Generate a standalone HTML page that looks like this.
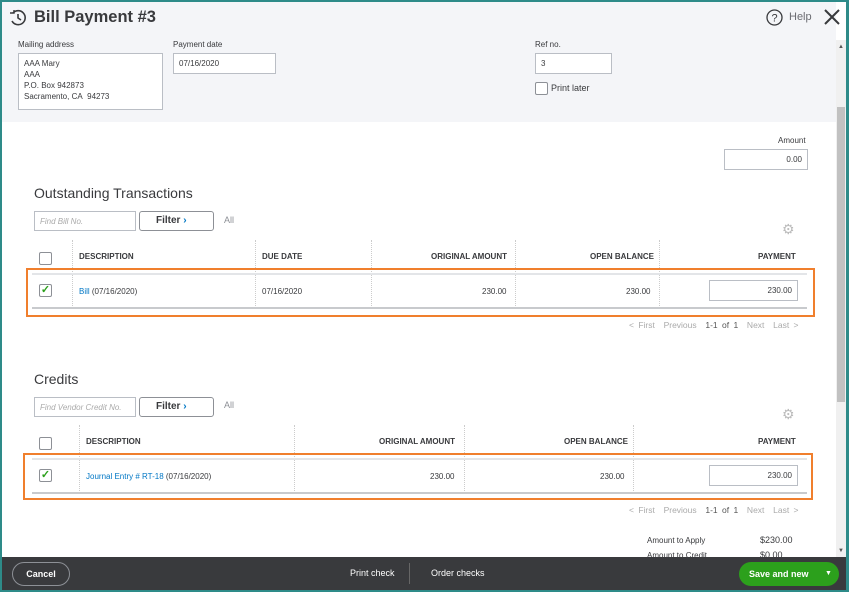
<!DOCTYPE html>
<html><head><style>
*{box-sizing:border-box;margin:0;padding:0}
body{width:849px;height:592px;overflow:hidden;background:#2e8b89;font-family:"Liberation Sans",sans-serif;color:#393a3d;position:relative}
.win{position:absolute;left:2px;top:2px;width:844px;height:588px;background:#fff;overflow:hidden}
.hdr{position:absolute;left:0;top:0;width:834px;height:120px;background:#f4f5f8}
.a{position:absolute}
.lbl{font-size:8px;color:#393a3d}
.inp{position:absolute;border:1px solid #babec5;background:#fff;font-size:8px;padding:0 5px;color:#393a3d;line-height:19px}
.th{position:absolute;font-size:8px;font-weight:bold;color:#393a3d}
.td{position:absolute;font-size:8px;color:#393a3d}
.vl{position:absolute;width:0;border-left:1px dotted #ccc}
.cb{position:absolute;width:13px;height:13px;border:1px solid #8d9096;background:#fff;border-radius:2px}
.orange{position:absolute;border:2.5px solid #f07f2d}
.pg{position:absolute;font-size:8.5px;color:#aaa;word-spacing:2px}
.filter{position:absolute;border:1px solid #8d9096;border-radius:3px;background:#fff;font-size:10px;font-weight:bold;width:75px;height:20px;line-height:18px;padding-left:16px;color:#393a3d}
.link{color:#0077c5}
</style></head><body>
<div class="win">
<div class="hdr"></div>
<svg class="a" style="left:7px;top:7px" width="18" height="18" viewBox="0 0 18 18" fill="none" stroke="#393a3d" stroke-width="1.6"><path d="M3 12A7 7 0 1 0 4 4"/><path d="M9 5v4l3 2"/><path d="M1 4h4V1" stroke-width="1.4"/></svg>
<div class="a" style="left:32px;top:6px;font-size:16.5px;font-weight:bold;color:#393a3d">Bill Payment #3</div>
<svg class="a" style="left:764px;top:7px" width="17" height="17" viewBox="0 0 17 17"><circle cx="8.5" cy="8.5" r="7.5" fill="none" stroke="#393a3d" stroke-width="1.3"/><text x="8.5" y="12.5" font-size="11" text-anchor="middle" fill="#393a3d" font-family="Liberation Sans">?</text></svg>
<div class="a" style="left:787px;top:9px;font-size:11px;color:#6b6c72">Help</div>
<svg class="a" style="left:821px;top:6px" width="18" height="18" viewBox="0 0 18 18" stroke="#393a3d" stroke-width="2"><path d="M2 2L16 16M16 2L2 16"/></svg>
<div class="a lbl" style="left:16px;top:38px">Mailing address</div>
<div class="inp" style="left:16px;top:51px;width:145px;height:57px;line-height:11px;padding-top:4px">AAA Mary<br>AAA<br>P.O. Box 942873<br>Sacramento, CA&nbsp; 94273</div>
<div class="a lbl" style="left:171px;top:38px">Payment date</div>
<div class="inp" style="left:171px;top:51px;width:103px;height:21px">07/16/2020</div>
<div class="a lbl" style="left:533px;top:38px">Ref no.</div>
<div class="inp" style="left:533px;top:51px;width:77px;height:21px">3</div>
<div class="cb" style="left:533px;top:80px"></div>
<div class="a lbl" style="left:549px;top:81px;font-size:9px">Print later</div>

<div class="a lbl" style="left:776px;top:134px">Amount</div>
<div class="inp" style="left:722px;top:147px;width:84px;height:21px;text-align:right">0.00</div>

<div class="a" style="left:32px;top:183px;font-size:14px">Outstanding Transactions</div>
<div class="inp" style="left:32px;top:209px;width:102px;height:20px;color:#aaa;font-style:italic">Find Bill No.</div>
<div class="filter" style="left:137px;top:209px">Filter <span class="link">›</span></div>
<div class="a" style="left:222px;top:213px;font-size:9px;color:#8d9096">All</div>
<div class="a" style="left:780px;top:219px;font-size:14px;color:#bbb">⚙</div>
<div class="cb" style="left:37px;top:250px"></div>
<div class="vl" style="left:70px;top:238px;height:66px"></div>
<div class="vl" style="left:253px;top:238px;height:66px"></div>
<div class="vl" style="left:369px;top:238px;height:66px"></div>
<div class="vl" style="left:513px;top:238px;height:66px"></div>
<div class="vl" style="left:657px;top:238px;height:66px"></div>
<div class="th" style="left:77px;top:250px">DESCRIPTION</div>
<div class="th" style="left:260px;top:250px">DUE DATE</div>
<div class="th" style="left:429px;top:250px">ORIGINAL AMOUNT</div>
<div class="th" style="left:588px;top:250px">OPEN BALANCE</div>
<div class="th" style="left:756px;top:250px">PAYMENT</div>
<div class="a" style="left:30px;top:271px;width:775px;height:2px;background:#e3e5e8"></div>
<div class="a" style="left:30px;top:305px;width:775px;height:2px;background:#c8cacd"></div>
<div class="cb" style="left:37px;top:282px;color:#2ca01c;font-size:11px;line-height:11px;text-align:center;font-weight:bold">✓</div>
<div class="td" style="left:77px;top:285px"><span class="link">Bill</span> (07/16/2020)</div>
<div class="td" style="left:260px;top:285px">07/16/2020</div>
<div class="td" style="left:480px;top:285px">230.00</div>
<div class="td" style="left:624px;top:285px">230.00</div>
<div class="inp" style="left:707px;top:278px;width:89px;height:21px;text-align:right">230.00</div>
<div class="orange" style="left:24px;top:266px;width:789px;height:49px"></div>
<div class="pg" style="left:627px;top:318px">&lt; First&nbsp; Previous&nbsp; <span style="color:#555">1-1 of 1</span>&nbsp; Next&nbsp; Last &gt;</div>

<div class="a" style="left:32px;top:369px;font-size:14px">Credits</div>
<div class="inp" style="left:32px;top:395px;width:102px;height:20px;color:#aaa;font-style:italic">Find Vendor Credit No.</div>
<div class="filter" style="left:137px;top:395px">Filter <span class="link">›</span></div>
<div class="a" style="left:222px;top:398px;font-size:9px;color:#8d9096">All</div>
<div class="a" style="left:780px;top:404px;font-size:14px;color:#bbb">⚙</div>
<div class="cb" style="left:37px;top:435px"></div>
<div class="vl" style="left:77px;top:423px;height:66px"></div>
<div class="vl" style="left:292px;top:423px;height:66px"></div>
<div class="vl" style="left:462px;top:423px;height:66px"></div>
<div class="vl" style="left:631px;top:423px;height:66px"></div>
<div class="th" style="left:84px;top:435px">DESCRIPTION</div>
<div class="th" style="left:377px;top:435px">ORIGINAL AMOUNT</div>
<div class="th" style="left:562px;top:435px">OPEN BALANCE</div>
<div class="th" style="left:756px;top:435px">PAYMENT</div>
<div class="a" style="left:30px;top:456px;width:775px;height:2px;background:#e3e5e8"></div>
<div class="a" style="left:30px;top:490px;width:775px;height:2px;background:#c8cacd"></div>
<div class="cb" style="left:37px;top:467px;color:#2ca01c;font-size:11px;line-height:11px;text-align:center;font-weight:bold">✓</div>
<div class="td" style="left:84px;top:470px"><span class="link">Journal Entry # RT-18</span> (07/16/2020)</div>
<div class="td" style="left:428px;top:470px">230.00</div>
<div class="td" style="left:598px;top:470px">230.00</div>
<div class="inp" style="left:707px;top:463px;width:89px;height:21px;text-align:right">230.00</div>
<div class="orange" style="left:21px;top:451px;width:790px;height:47px"></div>
<div class="pg" style="left:627px;top:503px">&lt; First&nbsp; Previous&nbsp; <span style="color:#555">1-1 of 1</span>&nbsp; Next&nbsp; Last &gt;</div>

<div class="a lbl" style="left:645px;top:534px">Amount to Apply</div>
<div class="a" style="left:758px;top:533px;font-size:9px">$230.00</div>
<div class="a lbl" style="left:645px;top:549px">Amount to Credit</div>
<div class="a" style="left:758px;top:548px;font-size:9px">$0.00</div>

<div class="a" style="left:834px;top:38px;width:10px;height:517px;background:#f0f0f0"></div>
<div class="a" style="left:835px;top:105px;width:8px;height:295px;background:#c1c1c1"></div>
<div class="a" style="left:836px;top:42px;font-size:6px;color:#555">▲</div>
<div class="a" style="left:836px;top:546px;font-size:6px;color:#555">▼</div>

<div class="a" style="left:0;top:555px;width:844px;height:33px;background:#393a3d"></div>
<div class="a" style="left:10px;top:560px;width:58px;height:24px;border:1px solid #8d9096;border-radius:12px;color:#fff;font-size:9px;font-weight:bold;text-align:center;line-height:22px">Cancel</div>
<div class="a" style="left:348px;top:566px;font-size:9px;color:#fff">Print check</div>
<div class="a" style="left:407px;top:561px;width:1px;height:21px;background:#666"></div>
<div class="a" style="left:429px;top:566px;font-size:9px;color:#fff">Order checks</div>
<div class="a" style="left:737px;top:560px;width:100px;height:24px;background:#2ca01c;border-radius:12px;color:#fff;font-size:9px;font-weight:bold;line-height:24px;padding-left:10px">Save and new<span style="position:absolute;left:86px;font-size:7px">▼</span></div>
</div>
</body></html>
